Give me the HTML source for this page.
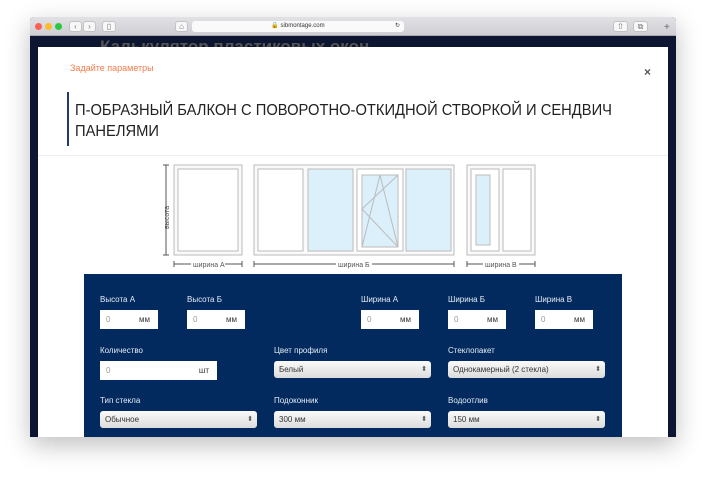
<!DOCTYPE html>
<html><head><meta charset="utf-8"><style>
*{box-sizing:border-box;margin:0;padding:0}
body{width:706px;height:480px;background:#fff;font-family:"Liberation Sans",sans-serif;position:relative;overflow:hidden}
.win{position:absolute;left:30px;top:17px;width:646px;height:420px;background:#0c1631;box-shadow:0 8px 25px rgba(0,0,0,.25);overflow:hidden;border-radius:4px 4px 0 0}
.tb{position:absolute;left:0;top:0;width:646px;height:19px;background:linear-gradient(#e2e1e6,#cfced4);border-bottom:1px solid #aaa}
.dot{position:absolute;top:6px;width:7px;height:7px;border-radius:50%}
.btn{position:absolute;top:4px;height:11px;background:#f7f7f7;border:1px solid #c3c3c3;border-radius:3px;font-size:8px;color:#777;text-align:center;line-height:9px}
.url{position:absolute;left:162px;top:4px;width:212px;height:11px;background:#fafafa;border-radius:3px;font-size:6px;text-align:center;line-height:11px;color:#333}
.bgt{position:absolute;left:70px;top:20px;font-size:17px;color:#555;font-weight:bold;white-space:nowrap}
.modal{position:absolute;left:8px;top:30px;width:630px;height:400px;background:#fff}
.sub{position:absolute;left:32px;top:16px;font-size:9px;color:#f47c4a}
.x{position:absolute;left:606px;top:18px;font-size:12px;color:#555;font-weight:bold}
.ttl{position:absolute;left:29px;top:45px;width:560px;border-left:2px solid #1d3a6a;height:54px}
.ttl div{position:absolute;left:6px;top:8px;width:680px;font-size:16px;line-height:21px;color:#222;transform:scaleX(.92);transform-origin:0 0}
.hr{position:absolute;left:0;top:108px;width:630px;border-top:1px solid #eee}
.panel{position:absolute;left:46px;top:227px;width:538px;height:180px;background:#022a5e}
.lb{position:absolute;font-size:8px;color:#e6ecf5}
.in{position:absolute;height:19px;background:#fff;font-size:8px;color:#999;line-height:19px;padding-left:6px}
.in span{position:absolute;right:8px;color:#333}
.sel{position:absolute;height:17px;background:linear-gradient(#fafafa,#dcdcdc);border-radius:3px;font-size:8px;color:#333;line-height:17px;padding-left:5px}
.sel:after{content:"⬍";position:absolute;right:4px;font-size:7px;color:#555}
</style></head><body>
<div class="win">
 <div class="tb">
  <div class="dot" style="left:5px;background:#fc5f57"></div><div class="dot" style="left:15px;background:#fdbb2e"></div><div class="dot" style="left:25px;background:#28c840"></div>
  <div class="btn" style="left:39px;width:13px">‹</div><div class="btn" style="left:53px;width:13px">›</div>
  <div class="btn" style="left:72px;width:14px">▯</div>
  <div class="btn" style="left:145px;width:13px">⌂</div>
  <div class="url">🔒 sibmontage.com<span style="position:absolute;right:4px">↻</span></div>
  <div class="btn" style="left:583px;width:15px">⇧</div><div class="btn" style="left:603px;width:15px">⧉</div>
  <div style="position:absolute;left:634px;top:5px;font-size:10px;color:#666">+</div>
 </div>
 <div class="bgt">Калькулятор пластиковых окон</div>
 <div class="modal">
  <div class="sub">Задайте параметры</div>
  <div class="x">×</div>
  <div class="ttl"><div>П-ОБРАЗНЫЙ БАЛКОН С ПОВОРОТНО-ОТКИДНОЙ СТВОРКОЙ И СЕНДВИЧ<br>ПАНЕЛЯМИ</div></div>
  <div class="hr"></div>
  <svg style="position:absolute;left:122px;top:110px" width="390" height="115" viewBox="0 0 390 115">
   <g fill="none" stroke="#bbb" stroke-width="1">
    <rect x="14" y="8" width="68" height="90" fill="#fafafa"/><rect x="18" y="12" width="60" height="82" fill="#fff"/>
    <rect x="94" y="8" width="200" height="90" fill="#fafafa"/>
    <rect x="98" y="12" width="45" height="82" fill="#fff"/>
    <rect x="148" y="12" width="45" height="82" fill="#dcf0fb"/>
    <rect x="197" y="12" width="46" height="82" fill="#fff"/><rect x="202" y="18" width="36" height="72" fill="#dcf0fb"/>
    <rect x="246" y="12" width="45" height="82" fill="#dcf0fb"/>
    <path d="M202 52 L238 18 M202 52 L238 90 M202 90 L220 18 L238 90"/>
    <rect x="307" y="8" width="68" height="90" fill="#fafafa"/>
    <rect x="311" y="12" width="28" height="82" fill="#fff"/><rect x="316" y="18" width="14" height="70" fill="#dcf0fb"/>
    <rect x="343" y="12" width="28" height="82" fill="#fff"/>
    <path stroke="#555" d="M6 8V98M3 8H9M3 98H9M14 107H82M14 104V110M82 104V110M94 107H294M94 104V110M294 104V110M307 107H375M307 104V110M375 104V110"/>
   </g>
   <g font-size="7" fill="#555" font-family="Liberation Sans">
    <rect x="31" y="103" width="34" height="8" fill="#fff"/><text x="33" y="110">ширина А</text>
    <rect x="176" y="103" width="36" height="8" fill="#fff"/><text x="178" y="110">ширина Б</text>
    <rect x="323" y="103" width="36" height="8" fill="#fff"/><text x="325" y="110">ширина В</text>
    <text transform="translate(9,72) rotate(-90)">высота</text>
   </g>
  </svg>
  <div class="panel">
   <div class="lb" style="left:16px;top:21px">Высота А</div><div class="in" style="left:16px;top:36px;width:58px">0<span>мм</span></div>
   <div class="lb" style="left:103px;top:21px">Высота Б</div><div class="in" style="left:103px;top:36px;width:58px">0<span>мм</span></div>
   <div class="lb" style="left:277px;top:21px">Ширина А</div><div class="in" style="left:277px;top:36px;width:58px">0<span>мм</span></div>
   <div class="lb" style="left:364px;top:21px">Ширина Б</div><div class="in" style="left:364px;top:36px;width:58px">0<span>мм</span></div>
   <div class="lb" style="left:451px;top:21px">Ширина В</div><div class="in" style="left:451px;top:36px;width:58px">0<span>мм</span></div>
   <div class="lb" style="left:16px;top:72px">Количество</div><div class="in" style="left:16px;top:87px;width:117px">0<span>шт</span></div>
   <div class="lb" style="left:190px;top:72px">Цвет профиля</div><div class="sel" style="left:190px;top:87px;width:157px">Белый</div>
   <div class="lb" style="left:364px;top:72px">Стеклопакет</div><div class="sel" style="left:364px;top:87px;width:157px">Однокамерный (2 стекла)</div>
   <div class="lb" style="left:16px;top:122px">Тип стекла</div><div class="sel" style="left:16px;top:137px;width:157px">Обычное</div>
   <div class="lb" style="left:190px;top:122px">Подоконник</div><div class="sel" style="left:190px;top:137px;width:157px">300 мм</div>
   <div class="lb" style="left:364px;top:122px">Водоотлив</div><div class="sel" style="left:364px;top:137px;width:157px">150 мм</div>
  </div>
 </div>
</div>
</body></html>
